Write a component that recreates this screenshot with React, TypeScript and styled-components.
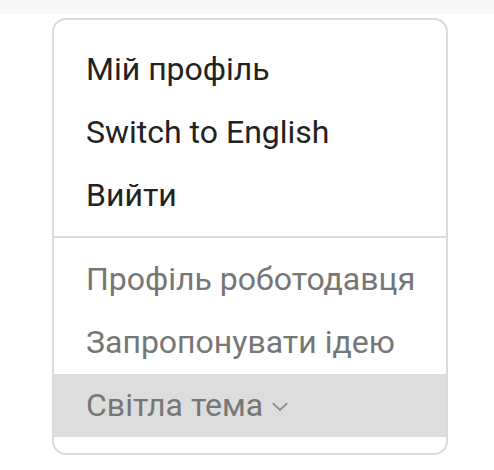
import React from "react";
import styled, { createGlobalStyle } from "styled-components";

const Global = createGlobalStyle`
  html, body { margin: 0; padding: 0; background: #ffffff; }
  body { font-family: Roboto, "Noto Sans", sans-serif; }
`;

const TopBar = styled.div`
  height: 14px;
  background: #f7f7f7;
`;

const Page = styled.div`
  padding: 4px 0 0 52px;
`;

const Menu = styled.div`
  width: 392px;
  border: 2px solid #dadada;
  border-radius: 14px;
  padding: 18px 0 16px;
  overflow: hidden;
  background: #fff;
`;

const Group = styled.div`
  display: flex;
  flex-direction: column;
`;

const Item = styled.div<{ $muted?: boolean; $active?: boolean }>`
  display: flex;
  align-items: center;
  gap: 9px;
  height: 63px;
  line-height: 63px;
  padding-left: 32px;
  font-size: 32px;
  color: ${(p) => (p.$muted ? "#767676" : "#222222")};
  background: ${(p) => (p.$active ? "#dddddd" : "transparent")};
  white-space: nowrap;
`;

const Divider = styled.div`
  height: 2px;
  background: #dcdcdc;
  margin: 9px 0 10px;
`;

const Chevron = styled.svg`
  width: 16px;
  height: 10px;
  margin-top: 3px;
  flex: none;
`;

export default function App() {
  return (
    <>
      <Global />
      <TopBar />
      <Page>
        <Menu>
          <Group>
            <Item>Мій профіль</Item>
            <Item>Switch to English</Item>
            <Item>Вийти</Item>
          </Group>
          <Divider />
          <Group>
            <Item $muted>Профіль роботодавця</Item>
            <Item $muted>Запропонувати ідею</Item>
            <Item $muted $active>
              Світла тема
              <Chevron viewBox="0 0 16 10">
                <path d="M1.2 1.5 L8 8 L14.8 1.5" fill="none" stroke="#7a7a7a" strokeWidth="1.5" strokeLinecap="round" strokeLinejoin="round" />
              </Chevron>
            </Item>
          </Group>
        </Menu>
      </Page>
    </>
  );
}
